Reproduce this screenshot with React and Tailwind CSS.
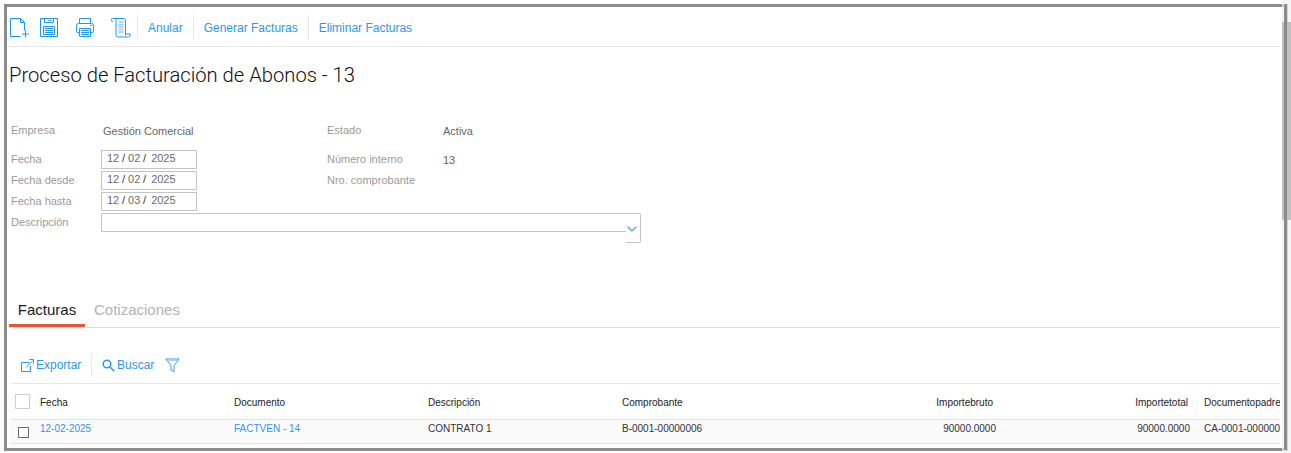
import React from 'react';
import { ChevronDown } from 'lucide-react';

const labelCls = 'text-[11px] leading-[13px] text-[#9a9a9a]';
const valueCls = 'text-[11px] leading-[13px] text-[#666]';

const DateBox = ({ day, month, year }) => (
  <div className="flex h-[19px] w-[96px] items-center border border-[#c4c4c4] pb-[2px] pl-[5px] text-[11px] text-[#6b6b6b]">
    <span className="w-[12px]">{day}</span>
    <span className="ml-[3px] text-[#333]">/</span>
    <span className="ml-[3px] w-[12px]">{month}</span>
    <span className="ml-[3px] text-[#333]">/</span>
    <span className="ml-[5px]">{year}</span>
  </div>
);

const NewIcon = () => (
  <svg width="20" height="20" viewBox="0 0 20 20" fill="none" stroke="#2196f3" strokeWidth="1">
    <path d="M10.500 18.500H.5V.5h10l4 4v8" />
    <path d="M10.500.5v4h4" />
    <path d="M15.500 12.500v7M12 16h7" />
  </svg>
);

const SaveIcon = () => (
  <svg width="18" height="19" viewBox="0 0 18 19" fill="none" stroke="#2196f3" strokeWidth="1">
    <path d="M.5.5h17v18H.5z" />
    <path d="M4.500.5v4h9v-4" />
    <path d="M8.500 2.500h3" />
    <path d="M3.500 8.500h11v8h-11z" />
    <path d="M5 10.500h8M5 12.500h8M5 14.500h8" />
  </svg>
);

const PrintIcon = () => (
  <svg width="18" height="19" viewBox="0 0 18 19" fill="none" stroke="#2196f3" strokeWidth="1">
    <path d="M3.500 5.500v-5h11v5" />
    <path d="M3.500 14.500h-2a1 1 0 0 1-1-1v-6a2 2 0 0 1 2-2h13a2 2 0 0 1 2 2v6a1 1 0 0 1-1 1h-2" />
    <path d="M3.500 10.500h11v8h-11z" />
    <path d="M5 12.500h8M5 14.500h8M5 16.500h8" />
    <path d="M14 7.500h2" />
  </svg>
);

const ScrollIcon = () => (
  <svg width="20" height="20" viewBox="0 0 20 20" fill="none" stroke="#2196f3" strokeWidth="1">
    <path d="M2.500 3.500h-1a1.500 1.500 0 0 1 0-3h11a2 2 0 0 1 2 2v15" />
    <path d="M4 .5c1.500.5 1.500 2 1 3v13a2.500 2.500 0 0 0 2.500 2.500h10a2 2 0 0 0 1.500-3h-4.500" />
    <path d="M7.500 4h5M7.500 6.500h5M7.500 9h5M7.500 11.500h5M7.500 14h5" stroke="#8ec9f8" strokeWidth="1.500" />
  </svg>
);

const ToolSep = () => <div className="h-[25px] w-px bg-[#e8e8e8]" />;

export default function App() {
  return (
    <div className="relative h-[453px] overflow-hidden bg-white font-['Liberation_Sans',sans-serif]">
      <div className="mx-[4px] mt-[4px] h-[447px] w-[1284px] border-[3px] border-[#8c8c8c] pl-[2px]">
        {/* toolbar */}
        <div className="flex h-[40px] w-[1271px] items-center border-b border-[#e8e8e8] pt-[2px]">
          <div className="ml-[1px] flex w-[127px] items-center">
            <div className="w-[30px]"><NewIcon /></div>
            <div className="w-[36px]"><SaveIcon /></div>
            <div className="w-[35px]"><PrintIcon /></div>
            <ScrollIcon />
          </div>
          <ToolSep />
          <span className="px-[10px] text-[12px] text-[#2f96ea]">Anular</span>
          <ToolSep />
          <span className="px-[10px] text-[12px] text-[#2f96ea]">Generar Facturas</span>
          <ToolSep />
          <span className="px-[10px] text-[12px] text-[#2f96ea]">Eliminar Facturas</span>
        </div>

        <h1 className="mt-[14px] font-['Roboto',sans-serif] text-[20.2px] leading-[28px] font-light text-[#111]">Proceso de Facturación de Abonos - 13</h1>

        {/* form */}
        <div className="mt-[35px] flex pl-[2px]">
          <div className="w-[316px]">
            <div className="flex h-[26px] items-start">
              <span className={`${labelCls} w-[92px]`}>Empresa</span>
              <span className={`${valueCls} pt-px`}>Gestión Comercial</span>
            </div>
            <div className="flex h-[21px] items-start">
              <span className={`${labelCls} mt-[3px] w-[90px]`}>Fecha</span>
              <DateBox day="12" month="02" year="2025" />
            </div>
            <div className="flex h-[21px] items-start">
              <span className={`${labelCls} mt-[3px] w-[90px]`}>Fecha desde</span>
              <DateBox day="12" month="02" year="2025" />
            </div>
            <div className="flex h-[21px] items-start">
              <span className={`${labelCls} mt-[3px] w-[90px]`}>Fecha hasta</span>
              <DateBox day="12" month="03" year="2025" />
            </div>
          </div>
          <div>
            <div className="flex h-[26px] items-start">
              <span className={`${labelCls} w-[116px]`}>Estado</span>
              <span className={`${valueCls} pt-px`}>Activa</span>
            </div>
            <div className="flex h-[21px] items-start">
              <span className={`${labelCls} mt-[3px] w-[116px]`}>Número interno</span>
              <span className={`${valueCls} mt-[4px] text-[#4a6a8a]`}>13</span>
            </div>
            <div className="flex h-[21px] items-start">
              <span className={`${labelCls} mt-[3px]`}>Nro. comprobante</span>
            </div>
          </div>
        </div>
        <div className="flex items-start pl-[2px]">
          <span className={`${labelCls} mt-[3px] w-[90px]`}>Descripción</span>
          <div className="flex h-[30px] w-[540px] items-start">
            <div className="h-[19px] flex-1 rounded-tl-[2px] border-t border-b border-l border-[#c4c4c4]" />
            <div className="relative h-[30px] w-[15px] rounded-r-[2px] border-t border-r border-b border-[#c4c4c4]">
              <ChevronDown className="absolute top-[7px] -left-[2px]" size={16} color="#4f98de" strokeWidth={1.6} />
            </div>
          </div>
        </div>

        {/* tabs */}
        <div className="mt-[53px] flex h-[32px] w-[1271px] items-end border-b border-[#dcdcdc]">
          <div className="flex h-[32px] w-[76px] items-start justify-center border-b-[3px] border-[#e8533c] pt-[6px] text-[15px] leading-[17px] text-[#1a1a1a]">Facturas</div>
          <div className="flex h-[32px] items-start pt-[6px] pl-[9px] text-[15px] leading-[17px] text-[#b3b3b3]">Cotizaciones</div>
        </div>

        {/* grid actions */}
        <div className="mt-[22px] ml-[2px] flex h-[30px] w-[1269px] items-center text-[12px] text-[#2f96ea]">
          <svg className="ml-[10px]" width="13" height="13" viewBox="0 0 13 13" fill="none" stroke="#2f96ea" strokeWidth="1">
            <path d="M8.500 3.500H.5v9h9V7" />
            <path d="M5 8.500 12 1.500M8.500.5h4v4" />
          </svg>
          <span className="ml-[2px] w-[55px]">Exportar</span>
          <div className="h-[24px] w-px bg-[#e8e8e8]" />
          <svg className="ml-[10px]" width="13" height="13" viewBox="0 0 13 13" fill="none" stroke="#2f96ea" strokeWidth="1.500">
            <circle cx="5" cy="5" r="3.800" />
            <path d="M8 8l4.300 4.300" />
          </svg>
          <span className="ml-[2px] w-[39px]">Buscar</span>
          <svg className="ml-[9px]" width="15" height="15" viewBox="0 0 15 15" fill="none" stroke="#3d9be6" strokeWidth="1">
            <path d="M.8 1h13.400L9 7.500v6.500L6 12V7.500z" />
            <path d="M3 2.500h9" stroke="#a8d4f5" />
          </svg>
        </div>

        {/* table */}
        <div className="mt-[3px] ml-[2px] w-[1269px] overflow-hidden border-t border-[#e8e8e8] text-[10px]">
          <div className="grid h-[36px] grid-cols-[29px_194px_194px_194px_194px_177px_195px_1fr] items-center border-b border-[#e4e4e4] pt-[2px] text-[#222]">
            <div className="-mt-[2px] ml-[4px] h-[15px] w-[15px] border border-[#cfcfcf]" />
            <span>Fecha</span>
            <span>Documento</span>
            <span>Descripción</span>
            <span>Comprobante</span>
            <span className="text-right">Importebruto</span>
            <span className="text-right">Importetotal</span>
            <span className="ml-[16px] whitespace-nowrap">Documentopadre</span>
          </div>
          <div className="grid h-[24px] grid-cols-[29px_194px_194px_194px_194px_180px_194px_1fr] items-start border-b border-[#e4e4e4] bg-[#fafafa] pt-px text-[#333]">
            <div className="mt-[6px] ml-[7px] h-[11px] w-[11px] border border-[#6e6e6e] bg-white" />
            <span className="text-[#2f96ea]">12-02-2025</span>
            <span className="text-[#2f96ea]">FACTVEN - 14</span>
            <span>CONTRATO 1</span>
            <span>B-0001-00000006</span>
            <span className="text-right">90000.0000</span>
            <span className="text-right">90000.0000</span>
            <span className="ml-[14px] whitespace-nowrap">CA-0001-000000</span>
          </div>
        </div>
      </div>

      {/* page scrollbar */}
      <div className="absolute top-0 right-0 bottom-0 w-[9px] bg-[#f1f1f1]/70">
        <div className="mt-[22px] h-[198px] w-full bg-[#c1c1c1]" />
      </div>
      <div className="absolute top-[4px] left-[1284px] h-[446px] w-[3px] bg-[#8c8c8c]" />
    </div>
  );
}
